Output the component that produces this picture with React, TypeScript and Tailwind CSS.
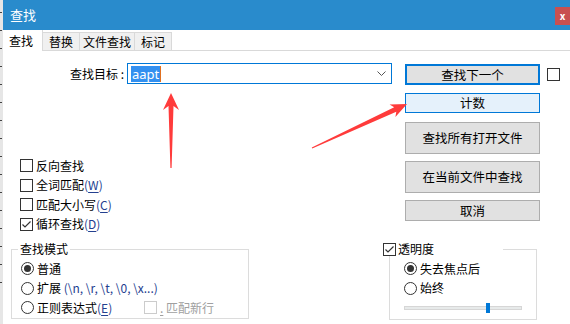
import React from "react";

const font = { fontFamily: '"Noto Sans CJK SC", "Noto Sans", sans-serif' };

function Box({ checked, disabled }: { checked?: boolean; disabled?: boolean }) {
  return (
    <span
      className={`flex h-[13px] w-[13px] shrink-0 items-center justify-center border bg-white ${
        disabled ? "border-[#cccccc]" : "border-[#333333]"
      }`}
    >
      {checked && (
        <svg width="11" height="11" viewBox="0 0 11 11">
          <path d="M1.5 5.5 L4 8 L9.5 2.5" fill="none" stroke="#333" strokeWidth="1.2" />
        </svg>
      )}
    </span>
  );
}

function Radio({ on }: { on?: boolean }) {
  return (
    <span className="flex h-[13px] w-[13px] shrink-0 items-center justify-center rounded-full border border-[#333333] bg-white">
      {on && <span className="h-[7px] w-[7px] rounded-full bg-[#333333]" />}
    </span>
  );
}

function Acc({ k }: { k: string }) {
  return (
    <span className="text-[#24408f]">
      (<span className="underline underline-offset-2">{k}</span>)
    </span>
  );
}

function CheckRow({ label, checked }: { label: React.ReactNode; checked?: boolean }) {
  return (
    <div className="flex h-[19.5px] items-center">
      <Box checked={checked} />
      <span className="ml-[3px]">{label}</span>
    </div>
  );
}

function Btn({ children, h, kind }: { children: React.ReactNode; h: string; kind?: "default" | "hover" }) {
  const cls =
    kind === "default"
      ? "border-2 border-[#0078d7] bg-[#e1e1e1]"
      : kind === "hover"
      ? "border border-[#0078d7] bg-[#e5f1fb]"
      : "border border-[#adadad] bg-[#e1e1e1]";
  return (
    <div className={`flex w-[135px] items-center justify-center text-[12.5px] text-black ${h} ${cls}`}>
      {children}
    </div>
  );
}

export default function App() {
  return (
    <div className="relative flex h-[324px] w-[570px] overflow-hidden bg-white text-[12px] leading-[14px] text-black" style={font}>
      {/* underlying window edge */}
      <div className="flex w-[3px] flex-col gap-[17px] bg-[#e6e6e6] pt-[12px]">
        {Array.from({ length: 16 }).map((_, i) => (
          <span key={i} className="h-px w-[2px] bg-[#444]" />
        ))}
      </div>

      <div className="flex flex-1 flex-col">
        {/* title bar */}
        <div className="flex h-[30px] items-start bg-[#298bcc]">
          <span className="ml-[7px] mt-[8px] text-[13px] leading-[14px] text-white">查找</span>
          <div className="ml-auto mt-[7px] flex h-[18px] w-[15px] items-center justify-center bg-[#c85050] text-[10px] font-bold leading-none text-white">
            x
          </div>
        </div>

        {/* tabs */}
        <div className="flex h-[21px] items-end border-b border-[#d9d9d9]">
          <div className="-mb-px flex h-[21px] w-[40px] items-center border-r border-[#d9d9d9] bg-white pl-[6px] pt-[1px]">查找</div>
          <div className="flex h-[18px] w-[37px] items-center justify-center border-r border-t border-[#d9d9d9] bg-[#f0f0f0]">替换</div>
          <div className="flex h-[18px] w-[55px] items-center justify-center border-r border-t border-[#d9d9d9] bg-[#f0f0f0]">文件查找</div>
          <div className="flex h-[18px] w-[37px] items-center justify-center border-r border-t border-[#d9d9d9] bg-[#f0f0f0]">标记</div>
        </div>

        {/* top area */}
        <div className="flex h-[190px]">
          <div className="flex w-[402px] flex-col">
            <div className="mt-[12px] flex items-center">
              <span className="w-[122px] pr-[1px] text-right">查找目标 :</span>
              <div className="ml-[2px] flex h-[21px] w-[265px] items-center border border-[#0078d7] bg-white pl-[3px] pr-[5px]">
                <span
                  className="bg-[#3390f0] px-[1px] text-[13px] leading-[16px] text-white"
                  style={{ fontFamily: '"Noto Sans", sans-serif' }}
                >
                  aapt
                </span>
                <span className="h-[16px] w-px bg-[#e07020]" />
                <svg className="ml-auto" width="9" height="6" viewBox="0 0 9 6">
                  <path d="M0.5 0.5 L4.5 4.5 L8.5 0.5" fill="none" stroke="#555" strokeWidth="1" />
                </svg>
              </div>
            </div>

            <div className="ml-[17px] mt-[72px] flex flex-col">
              <CheckRow label="反向查找" />
              <CheckRow label={<>全词匹配<Acc k="W" /></>} />
              <CheckRow label={<>匹配大小写<Acc k="C" /></>} />
              <CheckRow label={<>循环查找<Acc k="D" /></>} checked />
            </div>
          </div>

          <div className="flex flex-col">
            <div className="mt-[13px] flex items-center">
              <Btn h="h-[21px]" kind="default">查找下一个</Btn>
              <span className="ml-[7px]">
                <Box />
              </span>
            </div>
            <div className="mt-[8px]">
              <Btn h="h-[20px]" kind="hover">计数</Btn>
            </div>
            <div className="mt-[9px]">
              <Btn h="h-[32px]">查找所有打开文件</Btn>
            </div>
            <div className="mt-[7px]">
              <Btn h="h-[32px]">在当前文件中查找</Btn>
            </div>
            <div className="mt-[7px]">
              <Btn h="h-[21px]">取消</Btn>
            </div>
          </div>
        </div>

        {/* bottom area */}
        <div className="flex">
          <fieldset className="ml-[8px] mt-[1px] h-[77px] w-[238px] border border-[#dcdcdc]">
            <legend className="ml-[6px] px-[2px] leading-[14px]">查找模式</legend>
            <div className="mt-[3px] flex flex-col pl-[9px]">
              <div className="flex h-[19.5px] items-center">
                <Radio on />
                <span className="ml-[3px]">普通</span>
              </div>
              <div className="flex h-[19.5px] items-center">
                <Radio />
                <span className="ml-[3px]">
                  扩展 <span className="text-[#24408f]">(\n, \r, \t, \0, \x...)</span>
                </span>
              </div>
              <div className="flex h-[19.5px] items-center">
                <Radio />
                <span className="ml-[3px] w-[107px]">
                  正则表达式<Acc k="E" />
                </span>
                <Box disabled />
                <span className="ml-[3px] text-[#a0a0a0]">
                  <span className="underline underline-offset-2">.</span> 匹配新行
                </span>
              </div>
            </div>
          </fieldset>

          <div className="relative ml-[134px] w-[154px] pt-[8px]">
            <div className="absolute left-0 top-[1px] flex h-[14px] w-[120px] items-center bg-white">
              <Box checked />
              <span className="ml-[2px]">透明度</span>
            </div>
            <div className="ml-[6px] flex h-[71px] w-[148px] flex-col border border-[#dcdcdc] pl-[14px] pt-[9px]">
              <div className="flex h-[19.5px] items-center">
                <Radio on />
                <span className="ml-[3px]">失去焦点后</span>
              </div>
              <div className="flex h-[19.5px] items-center">
                <Radio />
                <span className="ml-[3px]">始终</span>
              </div>
              <div className="mt-[5px] flex h-[10px] w-[118px] items-center">
                <div className="flex h-[4px] w-full items-center border border-[#d6d6d6] bg-[#e7eaea]">
                  <span className="ml-[81px] h-[10px] w-[4px] shrink-0 bg-[#0078d7]" />
                </div>
              </div>
            </div>
          </div>
        </div>
      </div>

      {/* annotation arrows */}
      <svg className="pointer-events-none absolute left-0 top-0" width="570" height="324" viewBox="0 0 570 324">
        <polygon points="171,93 179,110 173.5,106 171.6,168 170.4,168 168.5,106 163,110" fill="#ff3b3b" />
        <polygon
          points="407,104 395.4,117 396.3,111.8 312.2,148.5 311.8,147.5 394.2,107.2 389.6,104.4"
          fill="#ff3b3b"
        />
      </svg>
    </div>
  );
}
